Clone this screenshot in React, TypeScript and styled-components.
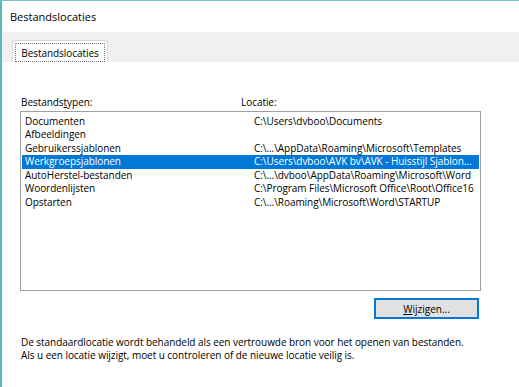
import React from "react";
import styled, { createGlobalStyle } from "styled-components";

const Global = createGlobalStyle`
  html, body { margin: 0; padding: 0; background: #ffffff; }
  body { font-family: "Open Sans", "Noto Sans", "Liberation Sans", sans-serif; }
`;

const Window = styled.div`
  width: 517px;
  height: 386px;
  border-left: 2px solid #5cbcbc;
  border-top: 1px solid #7cc4c4;
  background: #ffffff;
  display: flex;
  flex-direction: column;
  font-size: 10px;
  letter-spacing: -0.05px;
  color: #000;
  overflow: hidden;
  white-space: nowrap;
`;

const TitleBar = styled.div`
  height: 31px;
  display: flex;
  align-items: center;
  padding-left: 8px;
  font-size: 11px;
  letter-spacing: 0;
`;

const TabStrip = styled.div`
  height: 30px;
  background: #f0f0f0;
  display: flex;
  align-items: flex-end;
  padding-left: 10px;
`;

const Tab = styled.div`
  height: 22px;
  width: 96px;
  background: #ffffff;
  border: 1px solid #d9d9d9;
  border-bottom: none;
  padding: 2px 2px 0 2px;
  box-sizing: border-box;
  display: flex;
`;

const TabLabel = styled.div`
  flex: 1;
  border: 1px dotted #7a7a7a;
  height: 17px;
  display: flex;
  align-items: center;
  justify-content: center;
`;

const Panel = styled.div`
  flex: 1;
  display: flex;
  flex-direction: column;
  padding: 30px 38px 0 18px;
`;

const HeaderRow = styled.div`
  display: grid;
  grid-template-columns: 220px 1fr;
  height: 19px;
  align-items: center;
  padding-left: 1px;
`;

const Underline = styled.span`
  text-decoration: underline;
`;

const ListBox = styled.div`
  height: 180px;
  box-sizing: border-box;
  border: 1px solid #a0a0a0;
  padding: 2.5px 1px 0 1px;
  display: flex;
  flex-direction: column;
`;

const Row = styled.div<{ $selected?: boolean }>`
  height: 13.5px;
  flex-shrink: 0;
  display: grid;
  grid-template-columns: 229px 1fr;
  align-items: center;
  padding-left: 3px;
  background: ${(p) => (p.$selected ? "#0078d7" : "transparent")};
  color: ${(p) => (p.$selected ? "#ffffff" : "#000000")};
  line-height: 13px;
  overflow: hidden;
`;

const ButtonRow = styled.div`
  display: flex;
  justify-content: flex-end;
  padding-top: 7px;
  padding-right: 2px;
`;

const Button = styled.button`
  width: 105px;
  height: 21px;
  background: #e1e1e1;
  border: 2px solid #0078d7;
  font-family: inherit;
  font-size: 10px;
  color: #000;
  padding: 0;
`;

const Note = styled.div`
  margin-top: 17px;
  padding-left: 1px;
  line-height: 13px;
`;

const rows: [string, string][] = [
  ["Documenten", "C:\\Users\\dvboo\\Documents"],
  ["Afbeeldingen", ""],
  ["Gebruikerssjablonen", "C:\\...\\AppData\\Roaming\\Microsoft\\Templates"],
  ["Werkgroepsjablonen", "C:\\Users\\dvboo\\AVK bv\\AVK - Huisstijl Sjablon..."],
  ["AutoHerstel-bestanden", "C:\\...\\dvboo\\AppData\\Roaming\\Microsoft\\Word"],
  ["Woordenlijsten", "C:\\Program Files\\Microsoft Office\\Root\\Office16"],
  ["Opstarten", "C:\\...\\Roaming\\Microsoft\\Word\\STARTUP"],
];

export default function App() {
  return (
    <>
      <Global />
      <Window>
        <TitleBar>Bestandslocaties</TitleBar>
        <TabStrip>
          <Tab>
            <TabLabel>Bestandslocaties</TabLabel>
          </Tab>
        </TabStrip>
        <Panel>
          <HeaderRow>
            <span>
              Bestands<Underline>t</Underline>ypen:
            </span>
            <span>Locatie:</span>
          </HeaderRow>
          <ListBox>
            {rows.map(([a, b], i) => (
              <Row key={a} $selected={i === 3}>
                <span>{a}</span>
                <span>{b}</span>
              </Row>
            ))}
          </ListBox>
          <ButtonRow>
            <Button>
              <Underline>W</Underline>ijzigen...
            </Button>
          </ButtonRow>
          <Note>
            De standaardlocatie wordt behandeld als een vertrouwde bron voor het openen van bestanden.
            <br />
            Als u een locatie wijzigt, moet u controleren of de nieuwe locatie veilig is.
          </Note>
        </Panel>
      </Window>
    </>
  );
}
